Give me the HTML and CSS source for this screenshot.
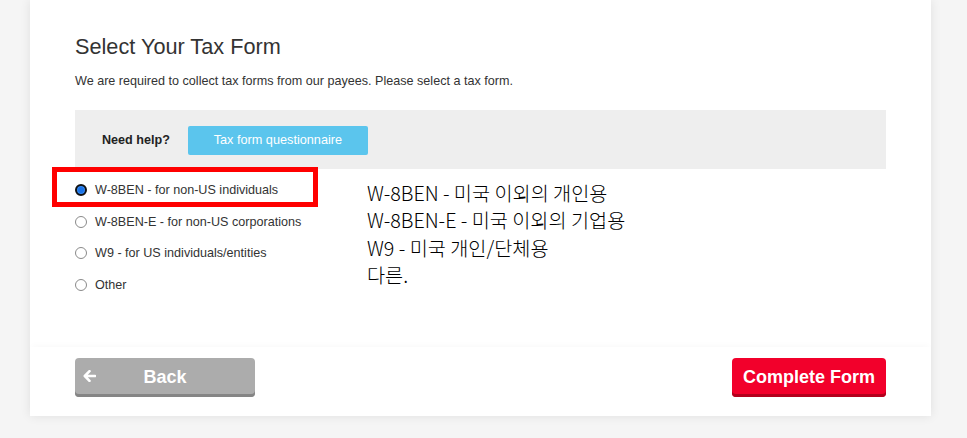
FILE: index.html
```html
<!DOCTYPE html>
<html lang="en">
<head>
<meta charset="utf-8">
<title>Select Your Tax Form</title>
<link rel="stylesheet" href="styles.css">
</head>
<body>
<div class="card">
  <div class="card-body">
    <h1 class="title">Select Your Tax Form</h1>
    <p class="subtitle">We are required to collect tax forms from our payees. Please select a tax form.</p>
    <div class="help-bar">
      <span class="help-label">Need help?</span>
      <button class="btn-questionnaire" type="button">Tax form questionnaire</button>
    </div>
    <div class="choices">
      <ul class="radio-list">
        <li class="radio-row"><span class="radio checked"></span><span class="radio-label">W-8BEN - for non-US individuals</span></li>
        <li class="radio-row"><span class="radio"></span><span class="radio-label">W-8BEN-E - for non-US corporations</span></li>
        <li class="radio-row"><span class="radio"></span><span class="radio-label">W9 - for US individuals/entities</span></li>
        <li class="radio-row"><span class="radio"></span><span class="radio-label">Other</span></li>
      </ul>
      <div class="translation">
        <div>W-8BEN - 미국 이외의 개인용</div>
        <div>W-8BEN-E - 미국 이외의 기업용</div>
        <div>W9 - 미국 개인/단체용</div>
        <div>다른.</div>
      </div>
    </div>
  </div>
  <div class="card-footer">
    <button class="btn btn-back" type="button">
      <svg class="back-arrow" width="13" height="12" viewBox="0 0 13 12" aria-hidden="true">
        <path d="M6.5 1.2 L1.8 6 L6.5 10.8 M2.2 6 H12" fill="none" stroke="#fff" stroke-width="2.6" stroke-linecap="round" stroke-linejoin="round"/>
      </svg>
      Back
    </button>
    <button class="btn btn-complete" type="button">Complete Form</button>
  </div>
  <div class="highlight"></div>
</div>
</body>
</html>
```

FILE: styles.css
```css
html, body {
  margin: 0;
  padding: 0;
}
body {
  background: #f5f5f5;
  font-family: "Liberation Sans", Arial, sans-serif;
  color: #333;
  width: 967px;
  height: 438px;
  overflow: hidden;
}
.card {
  position: relative;
  margin-left: 30px;
  width: 901px;
  height: 416px;
  background: #fff;
  box-shadow: 0 0 10px rgba(0, 0, 0, 0.09);
  display: flex;
  flex-direction: column;
}
.card-body {
  padding: 34px 45px 0;
  height: 313px;
  box-sizing: border-box;
}
.title {
  margin: 0;
  font-size: 21.7px;
  line-height: 26px;
  font-weight: normal;
  color: #333;
}
.subtitle {
  margin: 14px 0 0;
  font-size: 12.6px;
  line-height: 15px;
}
.help-bar {
  margin-top: 21px;
  height: 59px;
  background: #eeeeee;
  display: flex;
  align-items: center;
  padding-left: 27px;
  gap: 18px;
}
.help-label {
  font-size: 12.6px;
  font-weight: bold;
  color: #222;
}
.btn-questionnaire {
  width: 180px;
  height: 29px;
  border: none;
  border-radius: 2px;
  background: #5bc5ed;
  color: #fff;
  font-family: "Liberation Sans", Arial, sans-serif;
  font-size: 12.7px;
  padding: 0;
  margin-top: 1px;
}
.choices {
  display: flex;
  margin-top: 5px;
}
.radio-list {
  list-style: none;
  margin: 0;
  padding: 0;
  width: 292px;
}
.radio-row {
  height: 31.7px;
  display: flex;
  align-items: center;
  gap: 8px;
}
.radio {
  width: 12px;
  height: 12px;
  box-sizing: border-box;
  border-radius: 50%;
  border: 1px solid #8a8a8a;
  background: #fff;
}
.radio.checked {
  border: 2px solid #111;
  background: #1a73e8;
  box-shadow: inset 0 0 0 1px #3b8cf0;
}
.radio-label {
  font-size: 12.6px;
  color: #333;
}
.translation {
  margin-top: 5px;
  font-family: "Noto Sans CJK KR", "Noto Sans", sans-serif;
  font-size: 19.7px;
  font-weight: 300;
  line-height: 27.4px;
  color: #000;
}
.card-footer {
  margin-top: auto;
  height: 69px;
  box-sizing: border-box;
  padding: 11px 45px 0;
  display: flex;
  justify-content: space-between;
  align-items: flex-start;
  box-shadow: 0 -4px 6px -2px rgba(0, 0, 0, 0.025);
}
.btn {
  position: relative;
  height: 39px;
  border: none;
  border-radius: 4px;
  font-family: "Liberation Sans", Arial, sans-serif;
  font-size: 18px;
  font-weight: bold;
  color: #fff;
  padding: 1px 11px 2px;
}
.btn-back {
  width: 180px;
  background: #acacac;
  box-shadow: inset 0 -3px 0 #858585;
}
.back-arrow {
  position: absolute;
  left: 8px;
  top: 12px;
}
.btn-complete {
  width: 154px;
  background: #f2002b;
  box-shadow: inset 0 -3px 0 #b3001c;
}
.highlight {
  position: absolute;
  left: 22px;
  top: 167px;
  width: 266px;
  height: 40px;
  box-sizing: border-box;
  border: 5px solid #ff0000;
}
```
